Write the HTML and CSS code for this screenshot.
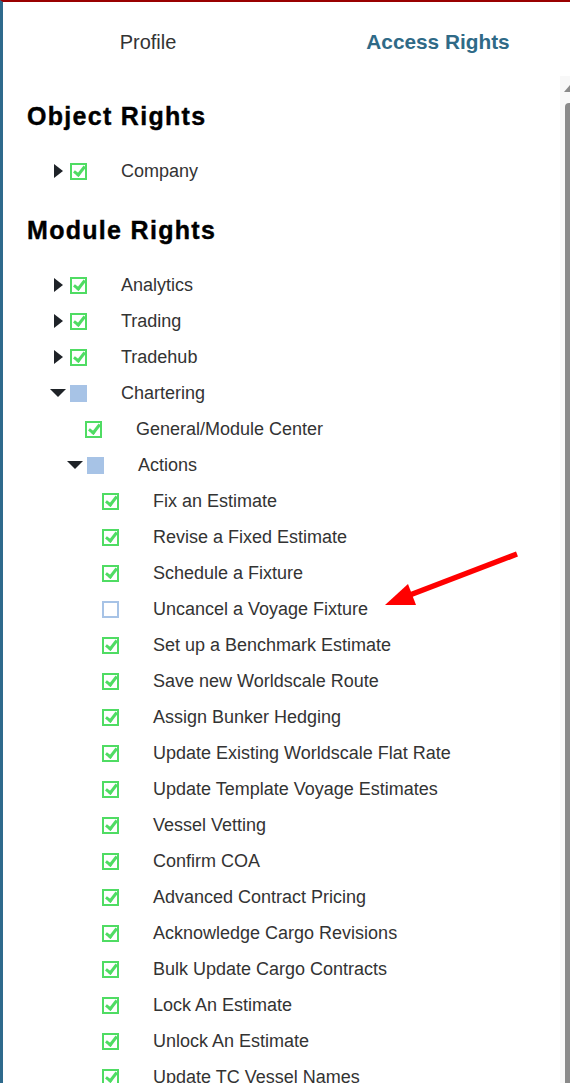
FILE: index.html
```html
<!DOCTYPE html>
<html>
<head>
<meta charset="utf-8">
<link rel="stylesheet" href="styles.css">
</head>
<body>
<div class="frame">
  <div class="tabs">
    <div class="tab">Profile</div>
    <div class="tab active">Access Rights</div>
  </div>
  <div class="pane">
    <div class="content">
      <h2 class="heading first">Object Rights</h2>
      <div class="row l0"><span class="toggle"><span class="tri-right"></span></span><span class="cb checked"></span><span class="label">Company</span></div>

      <h2 class="heading">Module Rights</h2>
      <div class="row l0"><span class="toggle"><span class="tri-right"></span></span><span class="cb checked"></span><span class="label">Analytics</span></div>
      <div class="row l0"><span class="toggle"><span class="tri-right"></span></span><span class="cb checked"></span><span class="label">Trading</span></div>
      <div class="row l0"><span class="toggle"><span class="tri-right"></span></span><span class="cb checked"></span><span class="label">Tradehub</span></div>
      <div class="row l0"><span class="toggle"><span class="tri-down"></span></span><span class="cb partial"></span><span class="label">Chartering</span></div>
      <div class="row l1"><span class="toggle"></span><span class="cb checked"></span><span class="label">General/Module Center</span></div>
      <div class="row l1 branch"><span class="toggle"><span class="tri-down"></span></span><span class="cb partial"></span><span class="label">Actions</span></div>
      <div class="row l2"><span class="toggle"></span><span class="cb checked"></span><span class="label">Fix an Estimate</span></div>
      <div class="row l2"><span class="toggle"></span><span class="cb checked"></span><span class="label">Revise a Fixed Estimate</span></div>
      <div class="row l2"><span class="toggle"></span><span class="cb checked"></span><span class="label">Schedule a Fixture</span></div>
      <div class="row l2"><span class="toggle"></span><span class="cb"></span><span class="label">Uncancel a Voyage Fixture</span></div>
      <div class="row l2"><span class="toggle"></span><span class="cb checked"></span><span class="label">Set up a Benchmark Estimate</span></div>
      <div class="row l2"><span class="toggle"></span><span class="cb checked"></span><span class="label">Save new Worldscale Route</span></div>
      <div class="row l2"><span class="toggle"></span><span class="cb checked"></span><span class="label">Assign Bunker Hedging</span></div>
      <div class="row l2"><span class="toggle"></span><span class="cb checked"></span><span class="label">Update Existing Worldscale Flat Rate</span></div>
      <div class="row l2"><span class="toggle"></span><span class="cb checked"></span><span class="label">Update Template Voyage Estimates</span></div>
      <div class="row l2"><span class="toggle"></span><span class="cb checked"></span><span class="label">Vessel Vetting</span></div>
      <div class="row l2"><span class="toggle"></span><span class="cb checked"></span><span class="label">Confirm COA</span></div>
      <div class="row l2"><span class="toggle"></span><span class="cb checked"></span><span class="label">Advanced Contract Pricing</span></div>
      <div class="row l2"><span class="toggle"></span><span class="cb checked"></span><span class="label">Acknowledge Cargo Revisions</span></div>
      <div class="row l2"><span class="toggle"></span><span class="cb checked"></span><span class="label">Bulk Update Cargo Contracts</span></div>
      <div class="row l2"><span class="toggle"></span><span class="cb checked"></span><span class="label">Lock An Estimate</span></div>
      <div class="row l2"><span class="toggle"></span><span class="cb checked"></span><span class="label">Unlock An Estimate</span></div>
      <div class="row l2"><span class="toggle"></span><span class="cb checked"></span><span class="label">Update TC Vessel Names</span></div>
    </div>
    <div class="scroll">
      <div class="scroll-up"></div>
      <div class="thumb"></div>
    </div>
  </div>
  <svg class="arrow" width="570" height="1083" viewBox="0 0 570 1083">
    <line x1="517" y1="554" x2="402" y2="598" stroke="#ff0000" stroke-width="5.5"/>
    <polygon points="385,605 408,584 416,605" fill="#ff0000"/>
  </svg>
</div>
</body>
</html>
```

FILE: styles.css
```css
html, body {
  margin: 0;
  padding: 0;
  background: #ffffff;
}

body {
  font-family: "Liberation Sans", Arial, sans-serif;
  color: #333333;
}

.frame {
  position: relative;
  width: 567px;
  height: 1081px;
  border-top: 2px solid #990000;
  border-left: 3px solid #2e6a8c;
  overflow: hidden;
  display: flex;
  flex-direction: column;
  background: #ffffff;
}

.tabs {
  display: flex;
  height: 74px;
  flex-shrink: 0;
  padding-top: 28px;
  box-sizing: border-box;
}

.tab {
  width: 290px;
  flex-shrink: 0;
  text-align: center;
  font-size: 20px;
  line-height: 24px;
  color: #333333;
}

.tab.active {
  font-size: 20.8px;
  font-weight: bold;
  color: #2f6a87;
}

.pane {
  flex: 1;
  display: flex;
  min-height: 0;
}

.content {
  flex: 1;
  padding-left: 24px;
  overflow: hidden;
}

.heading {
  margin: 26px 0 22px;
  font-size: 25px;
  line-height: 30px;
  font-weight: bold;
  letter-spacing: 1.3px;
  color: #000000;
  -webkit-text-stroke: 0.4px #000000;
}

.heading.first {
  margin-top: 25px;
}

.row {
  display: flex;
  align-items: center;
  height: 36px;
}

.row.l0 { padding-left: 21px; }
.row.l1 { padding-left: 36px; }
.row.l1.branch { padding-left: 38px; }
.row.l2 { padding-left: 53px; }

.toggle {
  width: 20px;
  height: 20px;
  margin-right: 2px;
  display: flex;
  align-items: center;
  justify-content: center;
  flex-shrink: 0;
}

.tri-right {
  width: 0;
  height: 0;
  border-top: 7px solid transparent;
  border-bottom: 7px solid transparent;
  border-left: 9px solid #1f2328;
}

.tri-down {
  width: 0;
  height: 0;
  border-left: 8px solid transparent;
  border-right: 8px solid transparent;
  border-top: 8px solid #1f2328;
}

.cb {
  width: 17px;
  height: 17px;
  box-sizing: border-box;
  border: 2px solid #a7c3e6;
  background: #ffffff;
  flex-shrink: 0;
  position: relative;
}

.cb.checked {
  border-color: #4fdc63;
}

.cb.checked::after {
  content: "";
  position: absolute;
  left: 3.5px;
  top: -1px;
  width: 4px;
  height: 9px;
  border-right: 3.5px solid #4fdc63;
  border-bottom: 3.5px solid #4fdc63;
  transform: rotate(38deg);
}

.cb.partial {
  border: none;
  background: #a7c3e6;
}

.label {
  margin-left: 34px;
  font-size: 18px;
  line-height: 22px;
  color: #333333;
  white-space: nowrap;
}

.scroll {
  width: 10px;
  flex-shrink: 0;
  background: #f8f8f8;
  display: flex;
  flex-direction: column;
}

.scroll-up {
  margin-top: 9px;
  margin-left: 4px;
  width: 0;
  height: 0;
  border-left: 6px solid transparent;
  border-right: 6px solid transparent;
  border-bottom: 7px solid #8a8a8a;
}

.thumb {
  margin-top: 11px;
  margin-left: 5px;
  width: 10px;
  flex: 1;
  background: #8a8a8a;
  border-radius: 4px 4px 0 0;
}

.arrow {
  position: absolute;
  top: -2px;
  left: -3px;
  pointer-events: none;
}
```
